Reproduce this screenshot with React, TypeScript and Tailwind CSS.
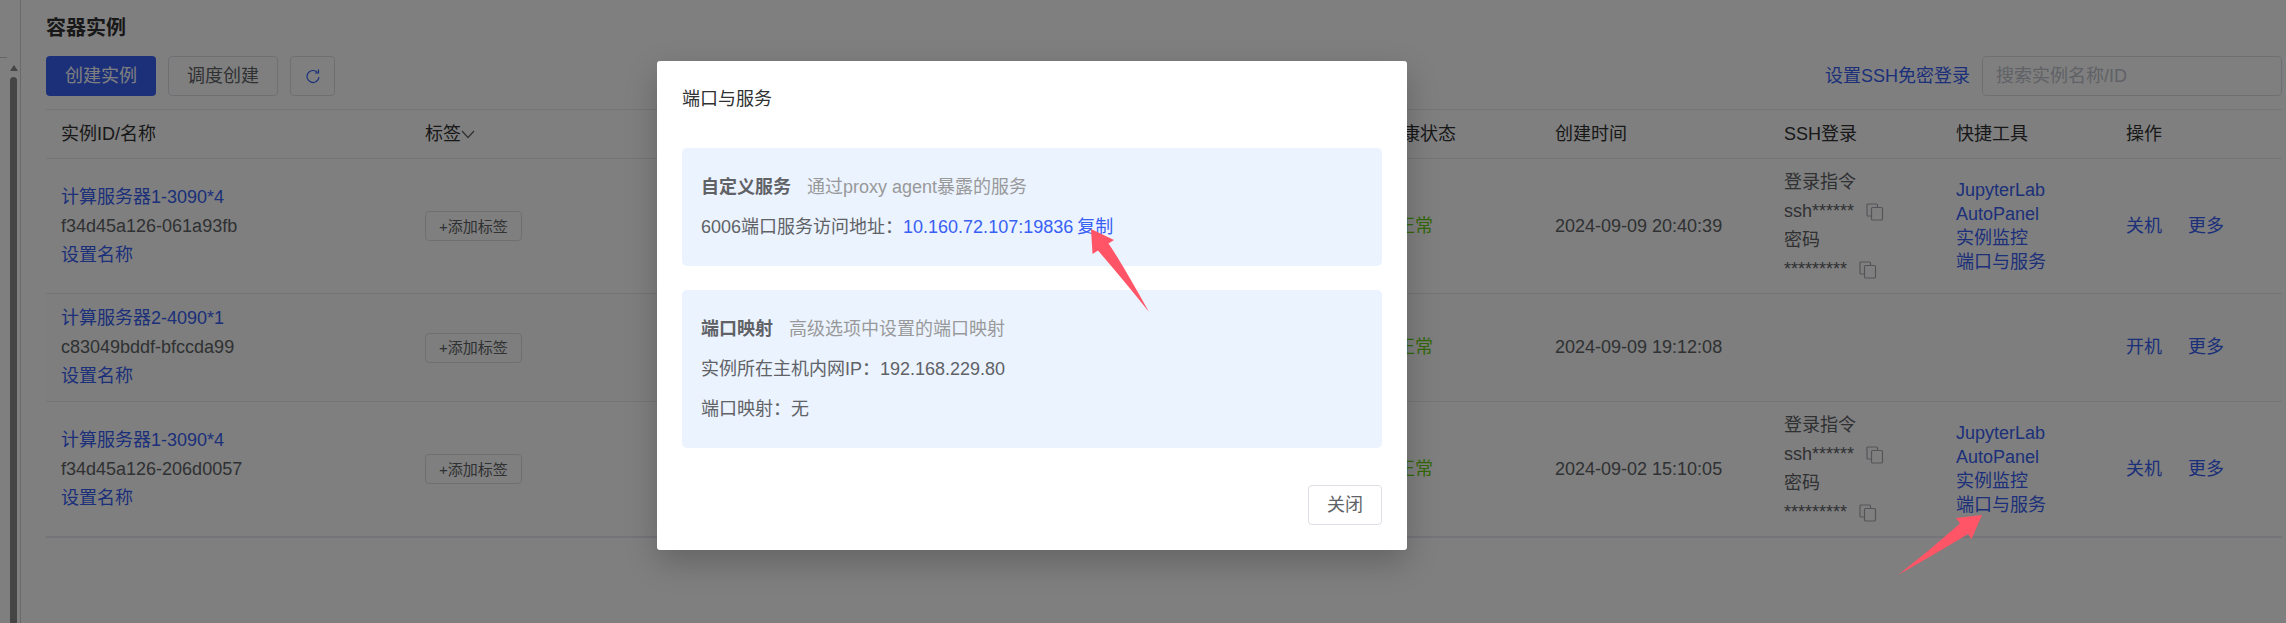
import React from "react";

type Instance = {
  name: string;
  id: string;
  created: string;
  running: boolean;
};

const instances: Instance[] = [
  { name: "计算服务器1-3090*4", id: "f34d45a126-061a93fb", created: "2024-09-09 20:40:39", running: true },
  { name: "计算服务器2-4090*1", id: "c83049bddf-bfccda99", created: "2024-09-09 19:12:08", running: false },
  { name: "计算服务器1-3090*4", id: "f34d45a126-206d0057", created: "2024-09-02 15:10:05", running: true },
];

function CopyIcon() {
  return (
    <svg viewBox="0 0 18 18" className="size-[18px]" fill="none" stroke="#a9abb2" strokeWidth="1.2">
      <path d="M5 13H2A1 1 0 0 1 1 12V2A1 1 0 0 1 2 1H10.500A1 1 0 0 1 11.500 2V4.500" />
      <rect x="5.500" y="4.500" width="11" height="12.500" rx="1" />
    </svg>
  );
}

function RefreshIcon() {
  return (
    <svg viewBox="0 0 14 15" className="h-[15px] w-[14px]" fill="none" stroke="#3860f4" strokeWidth="1.2">
      <path d="M11.500 3.500A6 6 0 1 0 13 8" />
      <path d="M12.500 0.500V4H9" />
    </svg>
  );
}

function ChevronIcon() {
  return (
    <svg viewBox="0 0 14 9" className="h-[9px] w-[14px]" fill="none" stroke="#606266" strokeWidth="1.2">
      <path d="M1 1L7 7.500L13 1" />
    </svg>
  );
}

function A({ children, className = "" }: { children: React.ReactNode; className?: string }) {
  return (
    <a href="#" className={`text-[#3860f4] ${className}`}>
      {children}
    </a>
  );
}

function Secret({ text, label }: { text: string; label: string }) {
  return (
    <div className="flex items-center gap-3">
      <span>{text}</span>
      <button type="button" aria-label={label}>
        <CopyIcon />
      </button>
    </div>
  );
}

function Row({ item, striped }: { item: Instance; striped: boolean }) {
  return (
    <tr className={`border-b border-[#e8e9f2] ${striped ? "bg-[#fafcfb]" : ""}`}>
      <td className="px-[15px] py-[10px]">
        <div className="flex flex-col items-start leading-[29px]">
          <A>{item.name}</A>
          <span>{item.id}</span>
          <A>设置名称</A>
        </div>
      </td>
      <td className="px-[15px]">
        <button type="button" className="block h-[30px] rounded-sm border border-[#dcdfe6] px-[13px] text-[15px] leading-none">
          +添加标签
        </button>
      </td>
      <td className="px-[15px] pl-[28px] text-[#67d010]">正常</td>
      <td className="px-[15px]">{item.created}</td>
      <td className="px-[15px] py-[9px] leading-[29px]">
        {item.running && (
          <>
            <div>登录指令</div>
            <Secret text="ssh******" label="复制登录指令" />
            <div>密码</div>
            <Secret text="*********" label="复制密码" />
          </>
        )}
      </td>
      <td className="px-[15px]">
        {item.running && (
          <div className="flex flex-col items-start leading-6">
            <A>JupyterLab</A>
            <A>AutoPanel</A>
            <A>实例监控</A>
            <A>端口与服务</A>
          </div>
        )}
      </td>
      <td className="px-[15px]">
        <div className="flex gap-[26px]">
          <A>{item.running ? "关机" : "开机"}</A>
          <A>更多</A>
        </div>
      </td>
    </tr>
  );
}

export default function App() {
  return (
    <div className="relative flex min-h-screen bg-white font-['Liberation_Sans','Noto_Sans_CJK_SC',sans-serif] text-[18px] leading-[29px] text-[#606266]">
      <aside className="flex w-[21px] shrink-0 border-r border-[#d3d4da]">
        <div className="w-[7px] pt-[57px]">
          <div className="border-t border-[#c8cad0]" />
        </div>
        <div className="flex flex-1 flex-col items-center pt-[65px]">
          <svg viewBox="0 0 8 6" className="h-[6px] w-[8px]" fill="#8a8a8a">
            <path d="M4 0L8 6H0Z" />
          </svg>
          <div className="mt-[6px] w-[7px] flex-1 rounded-t-full bg-[#8a8a8a]" />
        </div>
      </aside>

      <main className="min-w-0 flex-1 pr-1 pl-[25px]">
        <h1 className="pt-[13px] text-[20px] leading-[30px] font-bold text-[#303133]">容器实例</h1>
        <div className="mt-[13px] flex items-center justify-between">
          <div className="flex gap-3">
            <button type="button" className="h-10 w-[110px] rounded bg-[#3860f4] text-white">
              创建实例
            </button>
            <button type="button" className="h-10 w-[110px] rounded border border-[#dcdfe6]">
              调度创建
            </button>
            <button type="button" aria-label="刷新" className="flex h-10 w-[45px] items-center justify-center rounded border border-[#dcdfe6]">
              <RefreshIcon />
            </button>
          </div>
          <div className="flex items-center gap-3">
            <A>设置SSH免密登录</A>
            <input
              type="text"
              aria-label="搜索实例名称/ID"
              placeholder="搜索实例名称/ID"
              className="h-10 w-[300px] rounded border border-[#dcdfe6] bg-white px-[13px] placeholder:text-[#c0c4cc]"
            />
          </div>
        </div>

        <table className="mt-[13px] w-full table-fixed border-collapse text-left">
          <colgroup>
            <col className="w-[364px]" />
            <col />
            <col className="w-[171px]" />
            <col className="w-[229px]" />
            <col className="w-[172px]" />
            <col className="w-[170px]" />
            <col className="w-[171px]" />
          </colgroup>
          <thead>
            <tr className="h-[49px] border-y border-[#e8eaef] text-[#303133]">
              <th className="px-[15px] font-normal">实例ID/名称</th>
              <th className="px-[15px] font-normal">
                <span className="flex items-center">
                  标签
                  <ChevronIcon />
                </span>
              </th>
              <th className="px-[15px] font-normal">健康状态</th>
              <th className="px-[15px] font-normal">创建时间</th>
              <th className="px-[15px] font-normal">SSH登录</th>
              <th className="px-[15px] font-normal">快捷工具</th>
              <th className="px-[15px] font-normal">操作</th>
            </tr>
          </thead>
          <tbody>
            {instances.map((item, i) => (
              <Row key={item.id} item={item} striped={i === 1} />
            ))}
          </tbody>
        </table>
        <div className="border-t border-[#e8e9f2]" />
      </main>

      <div className="absolute inset-0 flex items-start justify-center bg-black/50 pt-[61px] pr-[222px]">
        <section
          role="dialog"
          aria-modal="true"
          aria-labelledby="dialog-title"
          className="w-[750px] rounded-[3px] bg-white p-[25px] shadow-[0_12px_32px_rgba(0,0,0,0.22)]"
        >
          <h2 id="dialog-title" className="leading-[26px] text-[#303133]">
            端口与服务
          </h2>
          <div className="mt-9 flex flex-col gap-6 leading-10">
            <div className="rounded-[5px] bg-[#ebf3ff] p-[19px]">
              <h3>
                <b>自定义服务</b>
                <span className="ml-4 text-[#999]">通过proxy agent暴露的服务</span>
              </h3>
              <p>
                6006端口服务访问地址：<A className="mr-1">10.160.72.107:19836</A>
                <button type="button" className="text-[#3860f4]">
                  复制
                </button>
              </p>
            </div>
            <div className="rounded-[5px] bg-[#ebf3ff] p-[19px]">
              <h3>
                <b>端口映射</b>
                <span className="ml-4 text-[#999]">高级选项中设置的端口映射</span>
              </h3>
              <p>实例所在主机内网IP：192.168.229.80</p>
              <p>端口映射：无</p>
            </div>
          </div>
          <div className="mt-[37px] flex justify-end">
            <button type="button" className="h-10 w-[74px] rounded border border-[#dcdfe6]">
              关闭
            </button>
          </div>
        </section>
      </div>

      <svg viewBox="0 0 60 85" className="absolute top-[228px] left-[1090px] h-[85px] w-[60px]" fill="#ff5566">
        <path d="M1 1L24 12L18.500 15.500Q30 32 59 84Q36 55 8 22.500L2.500 26Z" />
      </svg>
      <svg viewBox="0 0 86 62" className="absolute top-[514px] left-[1897px] h-[62px] w-[86px]" fill="#ff5566">
        <path d="M85 1L74.500 25L71 20Q45 36 1 61Q32 37 63 9.500L59 4Z" />
      </svg>
    </div>
  );
}
